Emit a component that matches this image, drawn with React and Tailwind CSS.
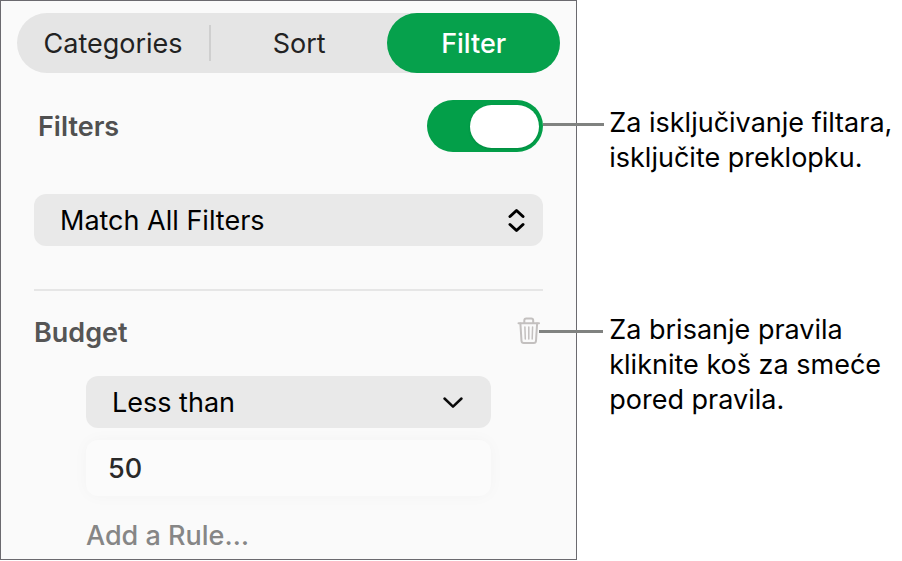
import React, { useState } from 'react';

function UpDownIcon() {
  return (
    <svg width="20" height="26" viewBox="0 0 20 26" fill="none" stroke="#000" strokeWidth="3" strokeLinecap="round" strokeLinejoin="round" aria-hidden="true">
      <path d="M3 9.5 L9.5 3.5 L16 9.5" />
      <path d="M3 17.5 L9.5 23.5 L16 17.5" />
    </svg>
  );
}

function DownIcon() {
  return (
    <svg width="24" height="16" viewBox="0 0 24 16" fill="none" stroke="#0a0a0a" strokeWidth="2.5" strokeLinecap="round" strokeLinejoin="round" aria-hidden="true">
      <path d="M3.5 4.5 L12 12.7 L20.5 4.5" />
    </svg>
  );
}

function TrashIcon() {
  return (
    <svg width="24" height="28" viewBox="0 0 24 28" fill="none" stroke="#c3c0bf" strokeWidth="2" strokeLinecap="round" strokeLinejoin="round" aria-hidden="true">
      <path d="M1.5 6.3 H22" />
      <path d="M7.3 6 V3.5 Q7.3 1.5 9.3 1.5 H14.2 Q16.2 1.5 16.2 3.5 V6" />
      <path d="M3.4 6.5 L4.5 24 Q4.7 26 6.7 26 H16.8 Q18.8 26 19 24 L20.1 6.5" />
      <path strokeWidth="1.5" d="M7.9 10 L8.3 22 M11.8 10 V22 M15.6 10 L15.2 22" />
    </svg>
  );
}

function Leader({ className }) {
  return <span className={`absolute left-full top-1/2 h-[3px] -translate-y-full bg-[#808280] ${className}`} aria-hidden="true" />;
}

const tabs = ['Categories', 'Sort', 'Filter'];

export default function FilterSidebar() {
  const [tab, setTab] = useState('Filter');
  const [enabled, setEnabled] = useState(true);
  const [match, setMatch] = useState('all');
  const [rule, setRule] = useState('less');
  const [amount, setAmount] = useState('50');

  return (
    <main className="flex items-start bg-white font-['Inter','Liberation_Sans',sans-serif] text-[27px] leading-[35px] text-black">
      <section className="w-[64%] shrink-0 border border-[#6b6a6f] bg-[#fafafa] pt-3 pb-1.5 font-medium">
        <nav className="mx-4 grid h-15 grid-cols-[194fr_176fr_173fr] items-center rounded-full bg-[#e5e5e5]">
          {tabs.map((name) => (
            <button
              key={name}
              type="button"
              onClick={() => setTab(name)}
              className={
                name === tab
                  ? 'h-full rounded-full bg-[#06a14c] font-medium text-white'
                  : 'h-9 border-[#cfcfcf] font-normal text-[#222] first:border-r-2'
              }
            >
              {name}
            </button>
          ))}
        </nav>

        <div className="px-[33px]">
          <div className="mt-[27px] flex items-center justify-between">
            <label htmlFor="filters" className="pl-1 font-semibold text-[#505050]">Filters</label>
            <div className="relative h-[52px]">
              <input
                id="filters"
                type="checkbox"
                role="switch"
                checked={enabled}
                onChange={(e) => setEnabled(e.target.checked)}
                className="flex h-[52px] w-[116px] appearance-none items-center rounded-full bg-[#c8c8c8] px-1 before:h-[43px] before:w-[69px] before:rounded-full before:bg-white before:shadow-sm checked:justify-end checked:bg-[#039f49]"
              />
              <Leader className="w-[61px]" />
            </div>
          </div>

          <div className="relative mt-[42px] h-[52px]">
            <select
              aria-label="Match"
              value={match}
              onChange={(e) => setMatch(e.target.value)}
              className="h-full w-full appearance-none rounded-xl bg-[#e9e9e9] px-[26px] font-normal"
            >
              <option value="all">Match All Filters</option>
              <option value="any">Match Any Filter</option>
            </select>
            <span className="pointer-events-none absolute inset-y-0 right-4 flex items-center"><UpDownIcon /></span>
          </div>

          <hr className="mt-[43px] border-t-2 border-[#e6e6e6]" />

          <div className="mt-6 flex items-center justify-between">
            <h2 className="font-semibold text-[#555]">Budget</h2>
            <div className="relative mr-0.5 h-8">
              <button type="button" aria-label="Delete rule" className="flex h-full items-start"><TrashIcon /></button>
              <Leader className="-ml-0.5 w-16" />
            </div>
          </div>

          <div className="mx-[52px] mt-[26px]">
            <div className="relative h-[52px]">
              <select
                aria-label="Condition"
                value={rule}
                onChange={(e) => setRule(e.target.value)}
                className="h-full w-full appearance-none rounded-xl bg-[#e9e9e9] px-[26px] font-normal"
              >
                <option value="less">Less than</option>
                <option value="greater">Greater than</option>
              </select>
              <span className="pointer-events-none absolute inset-y-0 right-[26px] flex items-center"><DownIcon /></span>
            </div>
            <input
              type="text"
              aria-label="Amount"
              value={amount}
              onChange={(e) => setAmount(e.target.value)}
              className="mt-3 block h-14 w-full rounded-xl bg-[#fbfbfb] px-[22px] text-[#2a2a2a] shadow-[0_0_16px_rgba(0,0,0,0.03)]"
            />
            <button type="button" className="mt-[22px] block text-[#868686]">Add a Rule…</button>
          </div>
        </div>
      </section>

      <aside className="flex min-w-0 flex-1 flex-col gap-[137px] pt-[105px] pl-8">
        <p>
          Za isključivanje filtara,
          <br />
          isključite preklopku.
        </p>
        <p>
          Za brisanje pravila
          <br />
          kliknite koš za smeće
          <br />
          pored pravila.
        </p>
      </aside>
    </main>
  );
}
